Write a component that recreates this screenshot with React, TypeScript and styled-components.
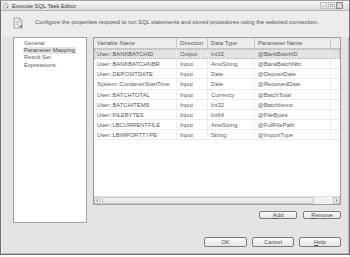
import styled, { createGlobalStyle } from "styled-components";

const GlobalStyle = createGlobalStyle`
  html, body {
    margin: 0;
    padding: 0;
    background: #ffffff;
  }
  body {
    font-family: "Liberation Sans", Arial, sans-serif;
  }
`;

const Window = styled.div`
  width: 350px;
  height: 255px;
  box-sizing: border-box;
  border: 1px solid #6c6c6c;
  border-top-color: #a0a0a0;
  background: #e4e4e4;
  display: flex;
  flex-direction: column;
  box-shadow: inset 1px 0 0 #f2f2f2, inset -1px 0 0 #bcbcbc,
    inset 0 -1px 0 #bcbcbc;
  font-size: 5.8px;
  color: #5a5a5a;
`;

const TitleBar = styled.div`
  height: 10px;
  box-sizing: border-box;
  display: flex;
  align-items: center;
  padding: 0 6px 0 2px;
  background: linear-gradient(#f7f7f7, #dcdcdc);
  border-bottom: 1px solid #b4b4b4;
`;

const TitleText = styled.span`
  margin-left: 3px;
  color: #3c3c3c;
  font-size: 5.8px;
  flex: 1;
`;

const Controls = styled.div`
  display: flex;
  gap: 1px;
`;

const ControlBox = styled.div<{ $dark?: boolean }>`
  width: 5px;
  height: 5px;
  border: 1px solid ${({ $dark }) => ($dark ? "#8a8a8a" : "#bdbdbd")};
  background: ${({ $dark }) => ($dark ? "#cfcfcf" : "#ececec")};
  display: flex;
  align-items: center;
  justify-content: center;
`;

const Header = styled.div`
  height: 26px;
  box-sizing: border-box;
  display: flex;
  align-items: flex-start;
  padding: 6px 0 0 12px;
  gap: 11px;
  background: #ececec;
`;

const HeaderText = styled.div`
  padding-top: 2px;
  color: #555;
`;

const Main = styled.div`
  display: flex;
  gap: 6px;
  padding: 0 8px 0 12px;
`;

const NavPanel = styled.div`
  width: 74px;
  height: 186px;
  box-sizing: border-box;
  background: #ffffff;
  border: 1px solid #a3a3a3;
  padding: 2px 0 0 9px;
  display: flex;
  flex-direction: column;
  align-items: flex-start;
`;

const NavItem = styled.div<{ $active?: boolean }>`
  line-height: 7.2px;
  padding: 0 1px;
  background: ${({ $active }) => ($active ? "#e6e6e6" : "transparent")};
  color: ${({ $active }) => ($active ? "#4a4a4a" : "#5a5a5a")};
`;

const RightCol = styled.div`
  flex: 1;
  display: flex;
  flex-direction: column;
`;

const Grid = styled.div`
  height: 168px;
  box-sizing: border-box;
  border: 1px solid #9e9e9e;
  background: #ffffff;
  display: flex;
  flex-direction: column;
`;

const columns = "83px 31px 47px 76px 1fr";

const HeadRow = styled.div`
  display: grid;
  grid-template-columns: ${columns};
  height: 11px;
  box-sizing: border-box;
  background: #ececec;
  border-bottom: 1px solid #c4c4c4;
`;

const HeadCell = styled.div`
  padding: 2px 0 0 3px;
  border-right: 1px solid #c8c8c8;
  color: #555;
  white-space: nowrap;
  overflow: hidden;
  &:last-child {
    border-right: none;
  }
`;

const Rows = styled.div`
  flex: 1;
`;

const Row = styled.div<{ $selected?: boolean }>`
  display: grid;
  grid-template-columns: ${columns};
  height: 10.15px;
  box-sizing: border-box;
  border-bottom: 1px solid #ececec;
  background: ${({ $selected }) => ($selected ? "#e3e3e3" : "#ffffff")};
  outline: ${({ $selected }) => ($selected ? "1px dotted #b0b0b0" : "none")};
  outline-offset: -1px;
`;

const Cell = styled.div`
  padding: 2px 0 0 3px;
  border-right: 1px solid #efefef;
  white-space: nowrap;
  overflow: hidden;
  &:last-child {
    border-right: none;
  }
`;

const ScrollBar = styled.div`
  height: 7px;
  display: flex;
  background: #f1f1f1;
  border-top: 1px solid #e2e2e2;
`;

const ScrollArrow = styled.div`
  width: 7px;
  height: 7px;
  box-sizing: border-box;
  border: 1px solid #c2c2c2;
  background: #ececec;
  display: flex;
  align-items: center;
  justify-content: center;
`;

const Track = styled.div`
  flex: 1;
  padding: 0 1px;
  display: flex;
`;

const Thumb = styled.div`
  width: 212px;
  height: 7px;
  box-sizing: border-box;
  border: 1px solid #c6c6c6;
  border-radius: 1px;
  background: linear-gradient(#f4f4f4, #e2e2e2);
`;

const ButtonRow = styled.div<{ $gap: number; $top: number }>`
  display: flex;
  justify-content: flex-end;
  gap: ${({ $gap }) => $gap}px;
  margin-top: ${({ $top }) => $top}px;
`;

const Footer = styled.div`
  display: flex;
  justify-content: flex-end;
  gap: 5px;
  padding: 14px 8px 0 0;
`;

const Button = styled.div<{ $w: number; $h: number }>`
  width: ${({ $w }) => $w}px;
  height: ${({ $h }) => $h}px;
  box-sizing: border-box;
  border: 1px solid #7a7a7a;
  border-radius: 2px;
  background: linear-gradient(#fafafa, #e6e6e6);
  display: flex;
  align-items: center;
  justify-content: center;
  color: #4e4e4e;
  & u {
    text-decoration-thickness: 0.5px;
  }
`;

const rows = [
  ["User::BANKBATCHID", "Output", "Int32", "@BankBatchID"],
  ["User::BANKBATCHNBR", "Input", "AnsiString", "@BankBatchNbr"],
  ["User::DEPOSITDATE", "Input", "Date", "@DepositDate"],
  ["System::ContainerStartTime", "Input", "Date", "@ReceivedDate"],
  ["User::BATCHTOTAL", "Input", "Currency", "@BatchTotal"],
  ["User::BATCHITEMS", "Input", "Int32", "@BatchItems"],
  ["User::FILEBYTES", "Input", "Int64", "@FileBytes"],
  ["User::LBCURRENTFILE", "Input", "AnsiString", "@FullFilePath"],
  ["User::LBIMPORTTYPE", "Input", "String", "@ImportType"],
];

const TaskIcon = ({ size }: { size: number }) => (
  <svg width={size} height={size * 1.2} viewBox="0 0 10 12">
    <path d="M1 1h5l2 2v7H1z" fill="#f4f4f4" stroke="#7a7a7a" strokeWidth="0.6" />
    <path d="M6 1v2h2" fill="none" stroke="#7a7a7a" strokeWidth="0.5" />
    <path d="M2.2 4h4M2.2 5.4h4M2.2 6.8h3" stroke="#9a9a9a" strokeWidth="0.5" />
    <path d="M5 8.5h3.2M7 7.3l1.3 1.2L7 9.7" fill="none" stroke="#555" strokeWidth="0.7" />
  </svg>
);

const App = () => {
  return (
    <>
      <GlobalStyle />
      <Window>
        <TitleBar>
          <TaskIcon size={6} />
          <TitleText>Execute SQL Task Editor</TitleText>
          <Controls>
            <ControlBox>
              <svg width="3" height="3" viewBox="0 0 3 3">
                <path d="M0 2.5h3" stroke="#999" strokeWidth="0.8" />
              </svg>
            </ControlBox>
            <ControlBox>
              <svg width="3" height="3" viewBox="0 0 3 3">
                <rect x="0.3" y="0.3" width="2.4" height="2.4" fill="none" stroke="#999" strokeWidth="0.6" />
              </svg>
            </ControlBox>
            <ControlBox $dark>
              <svg width="3" height="3" viewBox="0 0 3 3">
                <path d="M0 0l3 3M3 0L0 3" stroke="#f6f6f6" strokeWidth="0.8" />
              </svg>
            </ControlBox>
          </Controls>
        </TitleBar>
        <Header>
          <TaskIcon size={11} />
          <HeaderText>
            Configure the properties required to run SQL statements and stored
            procedures using the selected connection.
          </HeaderText>
        </Header>
        <Main>
          <NavPanel>
            <NavItem>General</NavItem>
            <NavItem $active>Parameter Mapping</NavItem>
            <NavItem>Result Set</NavItem>
            <NavItem>Expressions</NavItem>
          </NavPanel>
          <RightCol>
            <Grid>
              <HeadRow>
                <HeadCell>Variable Name</HeadCell>
                <HeadCell>Direction</HeadCell>
                <HeadCell>Data Type</HeadCell>
                <HeadCell>Parameter Name</HeadCell>
                <HeadCell />
              </HeadRow>
              <Rows>
                {rows.map((r, key) => (
                  <Row key={key} $selected={key === 0}>
                    {r.map((c, i) => (
                      <Cell key={i}>{c}</Cell>
                    ))}
                    <Cell />
                  </Row>
                ))}
              </Rows>
              <ScrollBar>
                <ScrollArrow>
                  <svg width="3" height="3" viewBox="0 0 3 3">
                    <path d="M2.2 0.2L0.7 1.5l1.5 1.3" fill="none" stroke="#444" strokeWidth="0.7" />
                  </svg>
                </ScrollArrow>
                <Track>
                  <Thumb />
                </Track>
                <ScrollArrow>
                  <svg width="3" height="3" viewBox="0 0 3 3">
                    <path d="M0.8 0.2l1.5 1.3L0.8 2.8" fill="none" stroke="#444" strokeWidth="0.7" />
                  </svg>
                </ScrollArrow>
              </ScrollBar>
            </Grid>
            <ButtonRow $gap={6} $top={6}>
              <Button $w={38} $h={8}>
                <span>
                  <u>A</u>dd
                </span>
              </Button>
              <Button $w={38} $h={8}>
                <span>
                  <u>R</u>emove
                </span>
              </Button>
            </ButtonRow>
          </RightCol>
        </Main>
        <Footer>
          <Button $w={43} $h={10}>OK</Button>
          <Button $w={42} $h={10}>Cancel</Button>
          <Button $w={42} $h={10}>
            <span>
              <u>H</u>elp
            </span>
          </Button>
        </Footer>
      </Window>
    </>
  );
};

export default App;
